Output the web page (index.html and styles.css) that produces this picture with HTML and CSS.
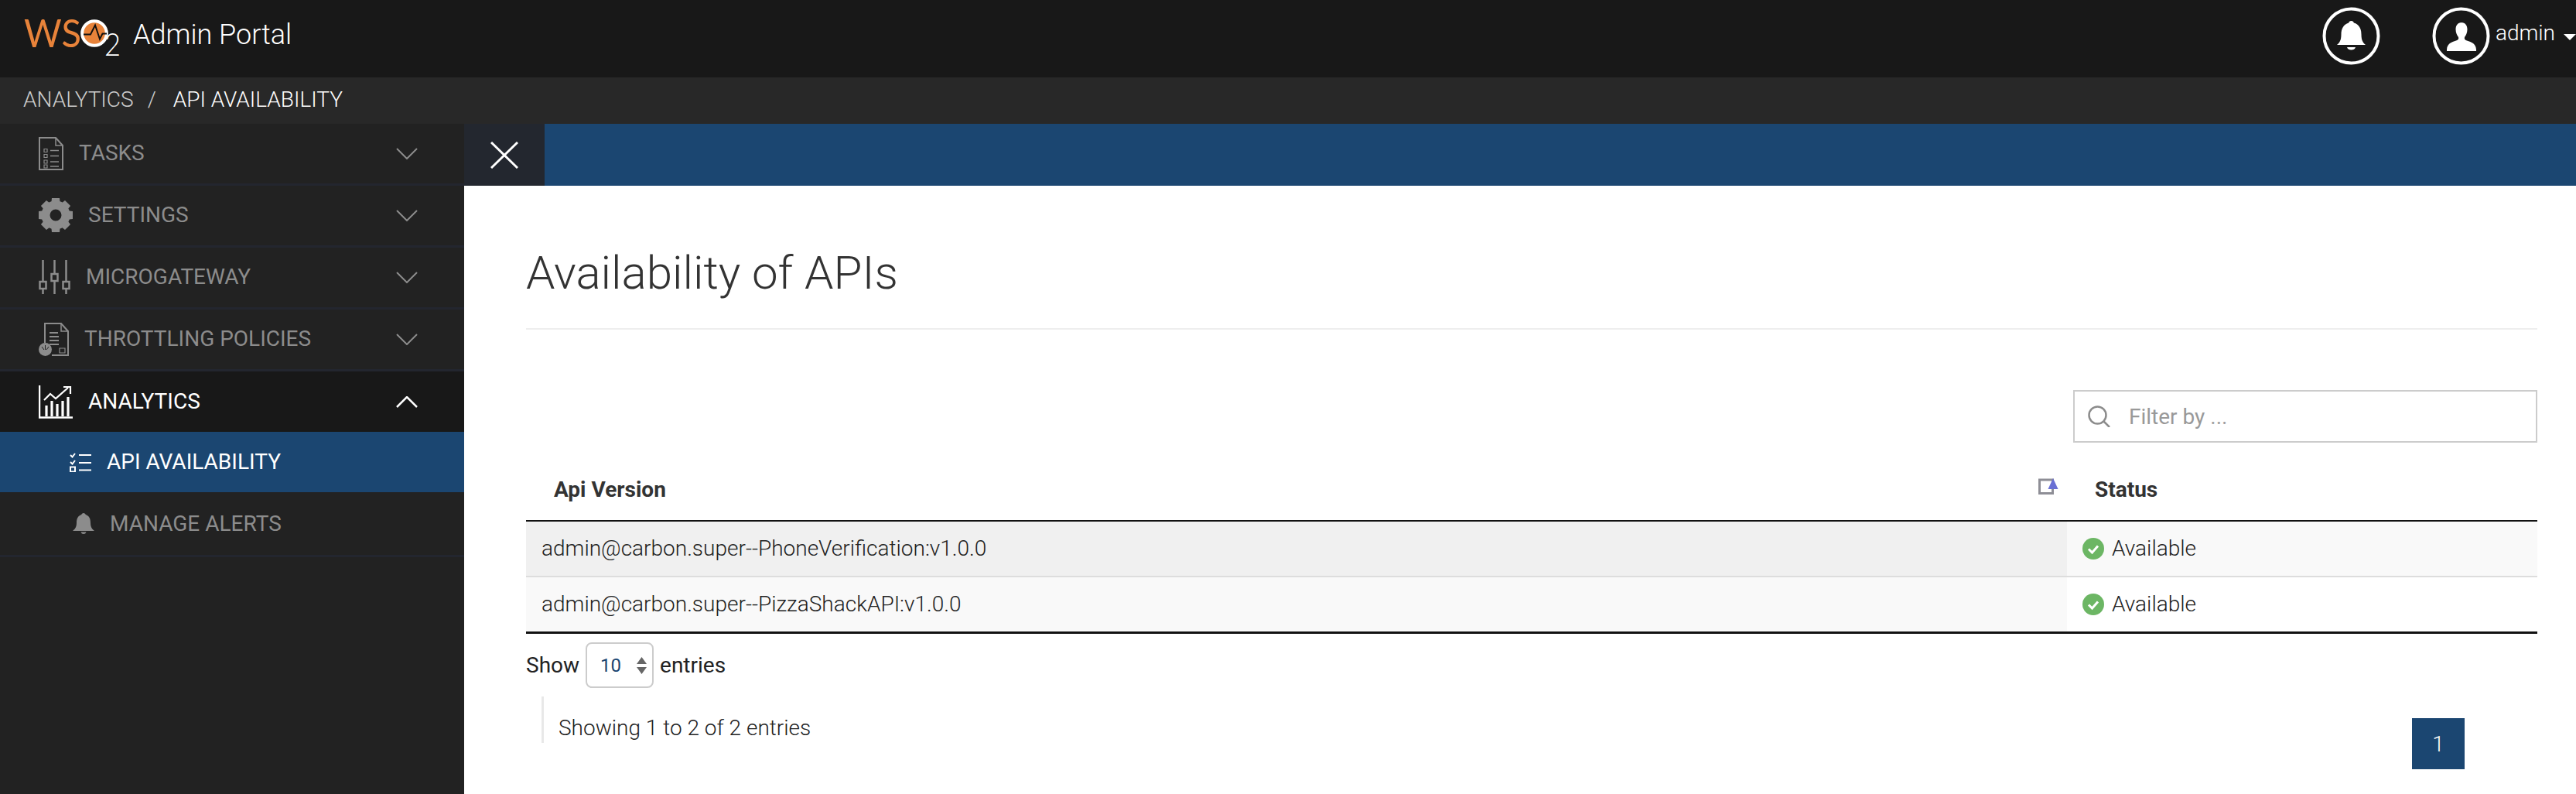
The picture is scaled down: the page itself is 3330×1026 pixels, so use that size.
FILE: index.html
```html
<!DOCTYPE html>
<html lang="en">
<head>
<meta charset="utf-8">
<title>Admin Portal</title>
<link rel="stylesheet" href="styles.css">
</head>
<body>
<header class="topbar">
  <div class="brand">
    <svg class="logo" width="125" height="48" viewBox="0 0 125 48">
      <text class="logo-ws" x="0" y="37" textLength="74" lengthAdjust="spacingAndGlyphs">WS</text>
      <circle cx="91" cy="19" r="15.8" fill="#e8833a" stroke="#fff" stroke-width="4"/>
      <path d="M77 20.500h9l6-12 6 18 3.500-7h5.500" fill="none" stroke="#111" stroke-width="2"/>
      <text class="logo-two" x="104" y="48" textLength="21" lengthAdjust="spacingAndGlyphs">2</text>
    </svg>
    <span class="brand-name">Admin Portal</span>
  </div>
  <div class="top-actions">
    <svg class="top-icon" width="75" height="75" viewBox="0 0 75 75">
      <circle cx="37.500" cy="37.500" r="35" fill="none" stroke="#fff" stroke-width="4"/>
      <path d="M37.500 18c2 0 3 1 3.300 2.500 7 2 9.700 8 9.700 15 0 8 2.500 11 5.500 13.500h-37c3-2.500 5.500-5.500 5.500-13.500 0-7 2.700-13 9.700-15 .3-1.500 1.300-2.500 3.300-2.500zM32 52h11c-.8 2.600-3 3.500-5.500 3.500s-4.700-.9-5.500-3.500z" fill="#fff"/>
    </svg>
    <svg class="top-icon user-icon" width="75" height="75" viewBox="0 0 75 75">
      <circle cx="37.500" cy="37.500" r="35" fill="none" stroke="#fff" stroke-width="4"/>
      <path d="M37.500 20c5.500 0 8 4 8 9 0 4.500-2 8-3.500 10-.6 2 .2 3.500 3 4.500 6 2.200 11.500 3.500 12 11.500v2h-38v-2c.5-8 6-9.300 12-11.500 2.800-1 3.600-2.500 3-4.500-1.500-2-3.500-5.500-3.500-10 0-5 2.500-9 8-9z" fill="#fff"/>
    </svg>
    <span class="user-name">admin</span>
    <span class="caret"></span>
  </div>
</header>
<nav class="crumbs">
  <span class="crumb-parent">ANALYTICS</span>
  <span class="crumb-sep">/</span>
  <span class="crumb-current">API AVAILABILITY</span>
</nav>
<div class="shell">
  <aside class="sidebar">
    <div class="nav-row">
      <svg width="32" height="43" viewBox="0 0 32 43" fill="none" stroke="#8c8c8c">
        <path d="M1 1h21l9 10v31H1z" stroke-width="2"/>
        <path d="M22 1v10h9" stroke-width="1.500"/>
        <path d="M7 15.500h4v4H7zM7 22.500h4v4H7zM7 30h4v4H7zM7 36h4v4H7z" stroke-width="1.200"/>
        <path d="M15 17.500h11M15 24.500h11M15 32h11M15 38h11" stroke-width="1.500"/>
      </svg>
      <span class="nav-label">TASKS</span>
      <svg class="chev" width="28" height="15" viewBox="0 0 28 15"><path d="M1 1l13 13L27 1" fill="none" stroke="#8c8c8c" stroke-width="2"/></svg>
    </div>
    <div class="nav-row">
      <svg width="44" height="44" viewBox="0 0 44 44">
        <circle cx="22" cy="22" r="13" fill="none" stroke="#8c8c8c" stroke-width="11"/>
        <g fill="#8c8c8c">
          <path d="M17 0h10l1 9H16z"/>
          <path d="M17 0h10l1 9H16z" transform="rotate(45 22 22)"/>
          <path d="M17 0h10l1 9H16z" transform="rotate(90 22 22)"/>
          <path d="M17 0h10l1 9H16z" transform="rotate(135 22 22)"/>
          <path d="M17 0h10l1 9H16z" transform="rotate(180 22 22)"/>
          <path d="M17 0h10l1 9H16z" transform="rotate(225 22 22)"/>
          <path d="M17 0h10l1 9H16z" transform="rotate(270 22 22)"/>
          <path d="M17 0h10l1 9H16z" transform="rotate(315 22 22)"/>
        </g>
      </svg>
      <span class="nav-label">SETTINGS</span>
      <svg class="chev" width="28" height="15" viewBox="0 0 28 15"><path d="M1 1l13 13L27 1" fill="none" stroke="#8c8c8c" stroke-width="2"/></svg>
    </div>
    <div class="nav-row">
      <svg width="41" height="44" viewBox="0 0 41 44" fill="none" stroke="#8c8c8c" stroke-width="2.500">
        <path d="M5.500 0v28M5.500 37v7M20.500 0v18M20.500 27v17M35.500 0v28M35.500 37v7"/>
        <path d="M1.500 28h8v9h-8zM16.500 18h8v9h-8zM31.500 28h8v9h-8z"/>
      </svg>
      <span class="nav-label">MICROGATEWAY</span>
      <svg class="chev" width="28" height="15" viewBox="0 0 28 15"><path d="M1 1l13 13L27 1" fill="none" stroke="#8c8c8c" stroke-width="2"/></svg>
    </div>
    <div class="nav-row">
      <svg width="39" height="43" viewBox="0 0 39 43" fill="none" stroke="#8c8c8c">
        <path d="M8 26V1h21l9 10v31H17" stroke-width="2"/>
        <path d="M29 1v10h9" stroke-width="1.500"/>
        <path d="M14 13h11M14 18h12M14 23h12M14 28h12" stroke-width="2"/>
        <path d="M27 33h7v6h-7z" stroke-width="1.200"/>
        <circle cx="8.500" cy="34.500" r="8.500" fill="#8c8c8c" stroke="none"/>
        <path d="M8.500 29v6M4 31l3 4M13 31l-3 4" stroke="#222" stroke-width="1"/>
      </svg>
      <span class="nav-label">THROTTLING POLICIES</span>
      <svg class="chev" width="28" height="15" viewBox="0 0 28 15"><path d="M1 1l13 13L27 1" fill="none" stroke="#8c8c8c" stroke-width="2"/></svg>
    </div>
    <div class="nav-row nav-open">
      <svg width="44" height="43" viewBox="0 0 44 43" fill="none" stroke="#fff">
        <path d="M1 0v41.500h43" stroke-width="2.500"/>
        <path d="M7 19l8-8 7 6 16-14" stroke-width="2.200"/>
        <path d="M32 2h9v9" stroke-width="2.200"/>
        <path d="M10 26v14M17 20v20M24 24v16M31 20v20M38 15v25" stroke-width="3.200"/>
      </svg>
      <span class="nav-label">ANALYTICS</span>
      <svg class="chev" width="28" height="15" viewBox="0 0 28 15"><path d="M1 14L14 1l13 13" fill="none" stroke="#fff" stroke-width="2.500"/></svg>
    </div>
    <div class="nav-sub nav-active">
      <svg width="28" height="25" viewBox="0 0 28 25" fill="none" stroke="#fff" stroke-width="2">
        <path d="M1 3l2.500 2.500L7 1M1 12l2.500 2.500L7 10"/>
        <path d="M1 18.500h6v6H1z"/>
        <path d="M12 3h16M12 13h16M12 22.500h16"/>
      </svg>
      <span class="nav-label">API AVAILABILITY</span>
    </div>
    <div class="nav-sub nav-last">
      <svg width="32" height="27" viewBox="1 0 32 27">
        <path d="M19 0c1.500 0 2.500 1 2.700 2 5 1.500 6.300 6 6.300 10.500 0 6 2.500 8.500 5 10.500H5c2.500-2 5-4.500 5-10.500C10 8 11.300 3.500 16.300 2 16.500 1 17.500 0 19 0zM15.500 24.500h7c-.5 1.700-2 2.500-3.500 2.500s-3-.8-3.500-2.500z" fill="#8c8c8c"/>
      </svg>
      <span class="nav-label">MANAGE ALERTS</span>
    </div>
  </aside>
  <main class="main">
    <div class="toolbar">
      <div class="close-btn">
        <svg width="36" height="35" viewBox="0 0 36 35"><path d="M1 1l34 33M35 1L1 34" fill="none" stroke="#fff" stroke-width="3"/></svg>
      </div>
    </div>
    <section class="content">
      <h1 class="page-title">Availability of APIs</h1>
      <div class="filter-row">
        <label class="filter">
          <svg width="29" height="28" viewBox="0 0 29 28" fill="none" stroke="#8c8c8c" stroke-width="2.500"><circle cx="12.500" cy="12.500" r="11"/><path d="M20 20l8 8"/></svg>
          <input class="filter-input" type="text" placeholder="Filter by ...">
        </label>
      </div>
      <table class="grid">
        <thead>
          <tr>
            <th class="col-api">Api Version
              <svg class="sort-icon" width="26" height="21" viewBox="0 0 26 21"><path d="M1.500 2h17v17.500h-17z" fill="none" stroke="#8e8e96" stroke-width="3"/><path d="M19 0l6.500 14h-13z" fill="#6a70d4"/></svg>
            </th>
            <th class="col-status">Status</th>
          </tr>
        </thead>
        <tbody>
          <tr class="row-odd">
            <td class="cell-sorted">admin@carbon.super--PhoneVerification:v1.0.0</td>
            <td class="cell-status"><span class="status"><svg width="28" height="28" viewBox="0 0 28 28"><circle cx="14" cy="14" r="14" fill="#6cb664"/><path d="M8 14.500l4.500 4.500L20 10.500" fill="none" stroke="#fff" stroke-width="3"/></svg>Available</span></td>
          </tr>
          <tr class="row-even">
            <td class="cell-sorted">admin@carbon.super--PizzaShackAPI:v1.0.0</td>
            <td class="cell-status"><span class="status"><svg width="28" height="28" viewBox="0 0 28 28"><circle cx="14" cy="14" r="14" fill="#6cb664"/><path d="M8 14.500l4.500 4.500L20 10.500" fill="none" stroke="#fff" stroke-width="3"/></svg>Available</span></td>
          </tr>
        </tbody>
      </table>
      <div class="length-row">
        <span>Show</span>
        <div class="length-select">
          <span class="length-value">10</span>
          <svg width="13" height="22" viewBox="0 0 13 22"><path d="M6.500 0L13 9H0zM6.500 22L0 13h13z" fill="#666"/></svg>
        </div>
        <span>entries</span>
      </div>
      <div class="footer-row">
        <div class="info">Showing 1 to 2 of 2 entries</div>
        <div class="page-btn">1</div>
      </div>
    </section>
  </main>
</div>
</body>
</html>
```
FILE: styles.css
```css
* { box-sizing: border-box; }
html, body { margin: 0; height: 100%; }
body {
  height: 1026px;
  overflow: hidden;
  display: flex;
  flex-direction: column;
  font-family: Roboto, "Liberation Sans", sans-serif;
  font-size: 28px;
  font-weight: 300;
  color: #222;
  background: #fff;
}
svg { display: block; flex: none; }

.topbar {
  height: 100px;
  flex: none;
  display: flex;
  justify-content: space-between;
  align-items: center;
  padding-left: 31px;
  background: #181818;
  color: #fff;
}
.brand { display: flex; align-items: flex-start; gap: 16px; height: 48px; margin-bottom: 4px; }
.logo { overflow: visible; }
.logo-ws { font-family: Lato, sans-serif; font-weight: 400; font-size: 51px; fill: #e8833a; }
.logo-two { font-family: Lato, sans-serif; font-weight: 300; font-size: 42px; fill: #fff; }
.brand-name { font-size: 36px; line-height: 42px; font-weight: 300; }
.top-actions { display: flex; align-items: center; margin-bottom: 8px; }
.user-icon { margin-left: 67px; }
.user-name { margin: 0 0 6px 7px; line-height: 40px; }
.caret {
  margin: 4px 0 0 11px;
  width: 0;
  height: 0;
  border-left: 8px solid transparent;
  border-right: 8px solid transparent;
  border-top: 8px solid #fff;
}

.crumbs {
  height: 60px;
  flex: none;
  display: flex;
  align-items: center;
  padding: 0 0 4px 30px;
  background: #282828;
  color: #fff;
}
.crumb-parent { color: #ccc; }
.crumb-sep { color: #ccc; margin: 0 22px 0 18px; }

.shell { flex: 1; min-height: 0; display: flex; }
.sidebar { width: 600px; flex: none; background: #222; }
.nav-row {
  height: 80px;
  display: flex;
  align-items: center;
  gap: 20px;
  padding: 0 60px 1px 50px;
  border-bottom: 3px solid #23262f;
  color: #8c8c8c;
}
.nav-label { line-height: 34px; font-weight: 400; }
.chev { margin-left: auto; }
.nav-open { height: 78px; background: #181818; color: #fff; border-bottom: 0; padding-bottom: 0; }
.nav-sub {
  height: 78px;
  display: flex;
  align-items: center;
  gap: 20px;
  padding-left: 90px;
  color: #8c8c8c;
}
.nav-active { background: #1b4671; color: #fff; }
.nav-last { height: 84px; border-bottom: 3px solid #23262f; }

.main { flex: 1; min-width: 0; display: flex; flex-direction: column; }
.toolbar { height: 80px; flex: none; background: #1b4671; }
.close-btn {
  width: 104px;
  height: 80px;
  display: flex;
  align-items: center;
  justify-content: center;
  background: #23272f;
}
.content { flex: 1; padding: 0 50px 0 80px; }
.page-title {
  margin: 0;
  padding: 80px 0 18px;
  height: 186px;
  border-bottom: 2px solid #eee;
  font-size: 60px;
  line-height: 66px;
  font-weight: 300;
  color: #333;
}
.filter-row { display: flex; justify-content: flex-end; margin-top: 78px; }
.filter {
  width: 600px;
  height: 68px;
  display: flex;
  align-items: center;
  gap: 24px;
  padding-left: 17px;
  border: 2px solid #ccc;
}
.filter-input {
  flex: 1;
  min-width: 0;
  border: 0;
  outline: 0;
  padding: 0;
  background: transparent;
  font: inherit;
  color: #333;
}
.filter-input::placeholder { color: #999; opacity: 1; font-weight: 400; }

.grid { width: 2600px; table-layout: fixed; border-collapse: separate; border-spacing: 0; }
.grid th {
  position: relative;
  height: 102px;
  padding: 0 0 22px 36px;
  vertical-align: bottom;
  text-align: left;
  font-weight: 700;
  line-height: 34px;
  color: #333;
  border-bottom: 2px solid #111;
}
.col-api { width: 1992px; }
.sort-icon { position: absolute; right: 11px; top: 46px; }
.grid td {
  height: 72px;
  padding: 0 0 0 20px;
  line-height: 34px;
  border-bottom: 2px solid #ddd;
}
.row-even td { border-bottom: 3px solid #111; height: 73px; }
.row-odd .cell-sorted { background: #f0f0f0; }
.row-odd .cell-status { background: #f9f9f9; }
.row-even .cell-sorted { background: #f9f9f9; }
.status { display: flex; align-items: center; gap: 10px; }

.length-row { display: flex; align-items: center; gap: 8px; margin-top: 11px; font-weight: 400; }
.length-select {
  width: 88px;
  height: 59px;
  display: flex;
  align-items: center;
  justify-content: space-between;
  padding: 0 7px 0 17px;
  border: 2px solid #ccc;
  border-radius: 8px;
}
.length-value { font-size: 24px; font-weight: 400; color: #1b4671; }

.footer-row { display: flex; justify-content: space-between; align-items: flex-start; margin-top: 11px; }
.info {
  margin-left: 20px;
  height: 60px;
  padding: 24px 0 0 19px;
  border-left: 3px solid #e8e8e8;
  line-height: 34px;
}
.page-btn {
  width: 68px;
  height: 66px;
  margin: 28px 94px 0 0;
  display: flex;
  align-items: center;
  justify-content: center;
  background: #1b4671;
  color: #fff;
}
```
